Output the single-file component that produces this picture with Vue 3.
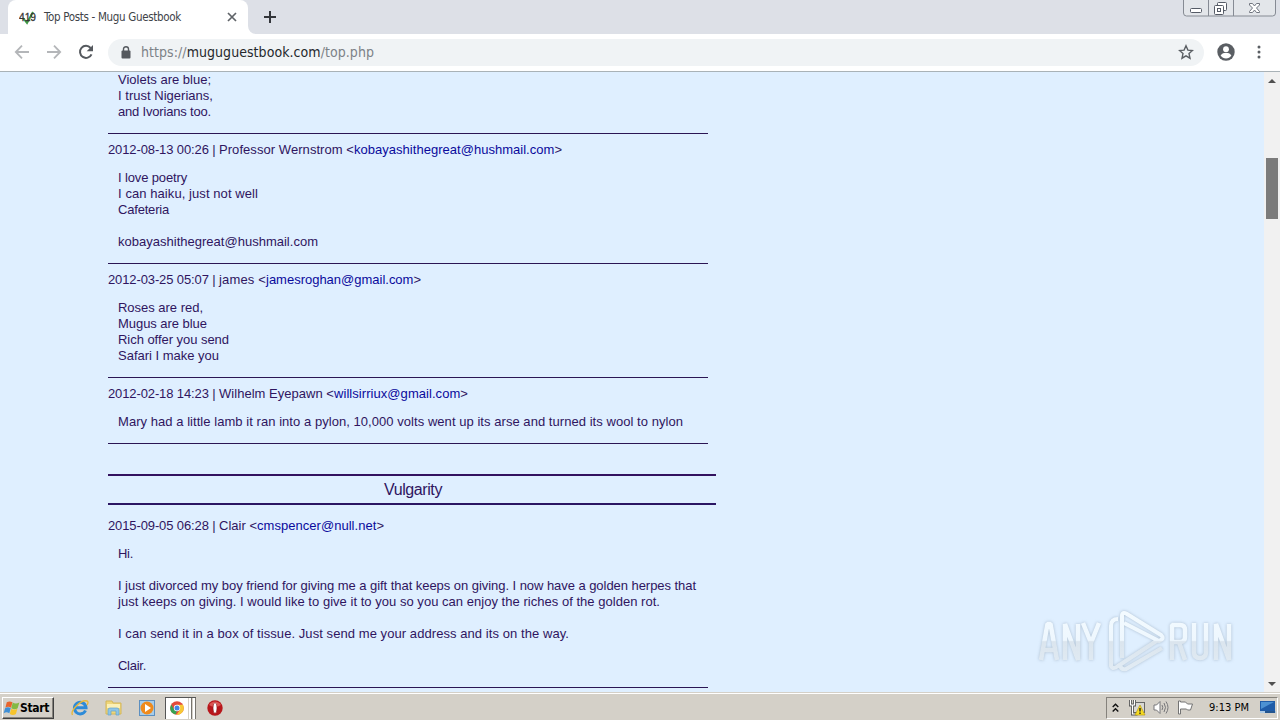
<template>
  <div class="screen">
    <div class="tabstrip">
      <div class="tab">
        <svg class="favicon" width="18" height="16" viewBox="0 0 18 16">
          <path d="M4 9l4 5 6-11" fill="none" stroke="#3f9a45" stroke-width="2" />
          <text x="0" y="11.500" font-size="11" textLength="17" lengthAdjust="spacingAndGlyphs" fill="#333" stroke="#333" stroke-width=".3">419</text>
        </svg>
        <span v-fit="137" class="tab-title">Top Posts - Mugu Guestbook</span>
        <svg class="tab-close" width="10" height="10" viewBox="0 0 10 10">
          <path d="M1 1l8 8M9 1l-8 8" stroke="#5f6368" stroke-width="1.7" />
        </svg>
        <svg class="tab-foot" width="8" height="8" viewBox="0 0 8 8"><path d="M0 0v8h8a8 8 0 0 1-8-8z" fill="#fff" /></svg>
      </div>
      <svg class="new-tab" width="12" height="12" viewBox="0 0 12 12">
        <path d="M6 0v12M0 6h12" stroke="#33363b" stroke-width="2" />
      </svg>
      <svg class="win-buttons" width="94" height="18" viewBox="0 0 94 18">
        <path d="M.5 0v13q0 3 3 3h86q3 0 3-3V0M25.500 0v16M50.500 0v16" fill="#e3e6ea" stroke="#868b94" />
        <rect x="7.500" y="8.500" width="11" height="4" rx="1" fill="#fff" stroke="#555b66" />
        <rect x="34.500" y="2.500" width="9" height="8" rx="1" fill="#fff" stroke="#555b66" />
        <rect x="31.500" y="5.500" width="9" height="9" rx="1" fill="#fff" stroke="#555b66" />
        <rect x="34.500" y="8.500" width="3" height="3" fill="#fff" stroke="#555b66" />
        <path d="M66.500 3.500h3l2 2.500 2-2.500h3v1.500L73.500 8l3 3.500v1h-3l-2-2.500-2 2.500h-3v-1l3-3.500-3-3z" fill="#fff" stroke="#70757f" />
      </svg>
    </div>

    <div class="toolbar">
      <svg class="nav" width="16" height="16" viewBox="0 0 16 16">
        <path d="M15 8H2M8 1.700L1.800 8 8 14.300" fill="none" stroke="#b4b6b9" stroke-width="1.800" />
      </svg>
      <svg class="nav" width="16" height="16" viewBox="0 0 16 16">
        <path d="M1 8h13M8 1.700L14.200 8 8 14.300" fill="none" stroke="#b4b6b9" stroke-width="1.800" />
      </svg>
      <svg class="nav" width="16" height="16" viewBox="0 0 16 16">
        <path d="M13.500 10.300A6 6 0 1 1 12.600 4" fill="none" stroke="#55595e" stroke-width="2" />
        <path d="M15 1v6.300H8.700z" fill="#55595e" />
      </svg>
      <div class="omnibox">
        <svg class="lock" width="10" height="13" viewBox="0 0 10 13">
          <rect x=".5" y="4.500" width="9" height="8" rx="1" fill="#55595e" />
          <path d="M2.500 5V3a2.500 2.300 0 0 1 5 0v2" fill="none" stroke="#55595e" stroke-width="1.400" />
        </svg>
        <span v-fit="233" class="url">https://<b>muguguestbook.com</b>/top.php</span>
        <svg class="star" width="16" height="16" viewBox="0 0 16 16">
          <path d="M8 1.800l1.900 4.300 4.600.4-3.500 3.100 1 4.600L8 11.800l-4 2.400 1-4.600-3.500-3.100 4.600-.4z" fill="none" stroke="#5a5e63" stroke-width="1.400" />
        </svg>
      </div>
      <svg class="avatar" width="18" height="18" viewBox="0 0 18 18">
        <circle cx="9" cy="9" r="8.700" fill="#5a5e63" />
        <circle cx="9" cy="6.200" r="2.900" fill="#fff" />
        <path d="M3.600 12.500c1.300-2 3.300-2.700 5.400-2.700s4.100.7 5.400 2.700c-1.300 2-3.300 2.900-5.400 2.900s-4.100-.9-5.400-2.900z" fill="#fff" />
      </svg>
      <svg class="menu" width="4" height="14" viewBox="0 0 4 14" fill="#5a5e63">
        <circle cx="2" cy="2" r="1.500" /><circle cx="2" cy="7" r="1.500" /><circle cx="2" cy="12" r="1.500" />
      </svg>
    </div>

    <div class="viewport">
      <div class="page">
        <div v-for="(post, i) in posts" :key="i" class="post">
          <h2 v-if="post.section"><span v-fit="58">{{ post.section }}</span></h2>
          <div v-if="post.name" class="head">
            <span v-fit="111">{{ post.date }} | </span>
            <span v-fit="post.nameWidth">{{ post.name }} &lt;</span>
            <span v-fit="post.mailWidth"><a>{{ post.email }}</a>&gt;</span>
          </div>
          <div class="message">
            <div v-for="(line, n) in post.lines" :key="n" class="line">
              <span v-if="line" v-fit="line[1]">{{ line[0] }}</span>
            </div>
          </div>
        </div>
      </div>

      <div class="scrollbar">
        <svg width="8" height="4" viewBox="0 0 8 4"><path d="M0 4l4-4 4 4z" fill="#505050" /></svg>
        <div class="thumb"></div>
        <svg width="8" height="4" viewBox="0 0 8 4"><path d="M0 0l4 4 4-4z" fill="#505050" /></svg>
      </div>

      <svg class="watermark" width="200" height="66" viewBox="0 0 200 66">
        <defs>
          <linearGradient id="fade" x1="0" y1="0" x2="0" y2="66" gradientUnits="userSpaceOnUse">
            <stop offset="0" stop-color="#f4fbff" />
            <stop offset=".49" stop-color="#eef7fe" />
            <stop offset=".51" stop-color="#dbe5ee" />
            <stop offset="1" stop-color="#e3edf5" />
          </linearGradient>
        </defs>
        <g fill="none" stroke="url(#fade)" stroke-width="4.500" stroke-linejoin="bevel">
          <path d="M5 52L11.500 16H14.500L21 52M8 42H18M29 52V16L42 52V16M47 15L55 35L63 15M55 34V52" />
          <path d="M136 52V17H144Q149 17 149 22V29Q149 34 144 34H136M143 34L149 52M158 15V44Q158 50 164 50Q170 50 170 44V15M180 52V16L193 52V16" />
          <path d="M82 11Q75 11 75 18V58Q77 62 82 58L122 32" stroke-width="4" stroke-linejoin="round" />
          <path d="M86 50V8Q86 3 91 6L125 27Q129 31 123 33L88 15M126 40L90 61Q85 62 84 57" stroke-width="4" stroke-linejoin="round" />
        </g>
      </svg>
    </div>

    <div class="taskbar">
      <div class="start">
        <svg width="17" height="16" viewBox="0 0 18 16">
          <path d="M4 2q3-2 6 0L8.500 7.700q-3-2-6 0z" fill="#e8642c" />
          <path d="M10.300 2.300q3 2 7 0L15.500 8.300q-3 2-6.700 0z" fill="#83b944" />
          <path d="M2.200 8.200q3-2 6 0L6.700 13.500q-3-2-6 0z" fill="#3f8fd6" />
          <path d="M8.700 8.700q3 2 6.500 0l-1.500 5.600q-3 2-6.500 0z" fill="#f6c42c" />
        </svg>
        <span v-fit="29">Start</span>
      </div>
      <svg class="task ie" width="18" height="18" viewBox="0 0 18 18">
        <path d="M14.500 11.500A5.800 5.800 0 1 1 15 8.700H5" fill="none" stroke="#2d8bd8" stroke-width="3" />
        <path d="M1.500 16C-1 12 10 0 16 2q2 1 0 4" fill="none" stroke="#e7b83c" stroke-width="1.400" />
      </svg>
      <svg class="task folder" width="17" height="17" viewBox="0 0 17 17">
        <path d="M1 2h6l1 2h8v11H1z" fill="#efd67a" stroke="#d3b659" />
        <path d="M2 5h13v4H2z" fill="#fbf0b6" />
        <path d="M3 16v-5q0-2 2-2h7q2 0 2 2v5h-3v-4H6v4z" fill="#8fc5e6" stroke="#62a4cf" stroke-width=".7" />
      </svg>
      <svg class="task player" width="16" height="16" viewBox="0 0 16 16">
        <rect x=".5" y=".5" width="15" height="15" fill="#a7cdea" stroke="#5c8fc0" />
        <circle cx="8" cy="8" r="6.500" fill="#ef8a1c" /><path d="M6 4l6 4-6 4z" fill="#fff" />
      </svg>
      <div class="running">
        <svg width="14" height="14" viewBox="0 0 14 14">
          <circle cx="7" cy="7" r="6.800" fill="#e34a3c" />
          <path d="M7 3.800h6a6.800 6.800 0 0 1-6.500 10L10 8.700z" fill="#f7c935" />
          <path d="M1.100 3.600L4.500 9 7 10l-1.500 3.600Q0 12 .2 7z" fill="#37a352" />
          <circle cx="7" cy="7" r="3.200" fill="#fff" /><circle cx="7" cy="7" r="2.500" fill="#4285e8" />
        </svg>
        <i></i><i></i>
      </div>
      <svg class="task opera" width="16" height="16" viewBox="0 0 16 16">
        <circle cx="8" cy="8" r="7.700" fill="#b8161b" /><path d="M2 5a7 7 0 0 1 12 0q-6 4-12 0z" fill="#dc5552" />
        <ellipse cx="8" cy="8" rx="2" ry="5.300" fill="#fff" stroke="#851015" stroke-width=".6" />
      </svg>

      <div class="tray">
        <svg class="chevrons" width="7" height="10" viewBox="0 0 7 10">
          <path d="M.7 4l2.800-2.800L6.300 4M.7 8.500l2.800-2.800 2.800 2.800" fill="none" stroke="#111" stroke-width="1.400" />
        </svg>
        <svg class="network" width="17" height="16" viewBox="0 0 17 16">
          <rect x="4.500" y="2.500" width="11" height="10" fill="#d9d8d4" stroke="#666" />
          <path d="M1.500 0v5h4V0M3.500 5v9h5" fill="none" stroke="#555" stroke-width="3" />
          <path d="M1.500 0v5h4V0M3.500 5v9h5" fill="none" stroke="#fff" stroke-width="1.200" />
          <path d="M11 5l5 10H6z" fill="#f7dc22" stroke="#b89b14" stroke-width=".7" />
          <path d="M11 8v3.500M11 12.500v1.500" stroke="#222" stroke-width="1.400" />
        </svg>
        <svg class="sound" width="17" height="15" viewBox="0 0 17 15" stroke="#77777a" fill="none">
          <path d="M1 5h2.500L7 1.500v12L3.500 10H1z" fill="#fff" />
          <path d="M9 5q1.500 2.500 0 5M11 3q3 4.500 0 9M13 1.500q4 6 0 12" />
        </svg>
        <svg class="flag" width="17" height="15" viewBox="0 0 17 15">
          <path d="M1.500 1v13h2V9h6l1 1h3l2-6h-5l-2-2h-5V1z" fill="#fff" stroke="#737373" />
        </svg>
        <span v-fit="40" class="clock">9:13 PM</span>
        <svg class="desktop" width="16" height="13" viewBox="0 0 16 13">
          <path d="M0 0h15v10H0z" fill="#1f5ca8" /><path d="M1 1h13L1 8z" fill="#4c91d2" />
          <path d="M0 10h16v2H0z" fill="#aac8e4" /><path d="M5 10h10v2H5z" fill="#23558f" />
        </svg>
      </div>
    </div>
  </div>
</template>

<script setup>
// lines are [text, width in px]; null is an empty line
const posts = [
  {
    lines: [
      ['Violets are blue;', 93],
      ['I trust Nigerians,', 95],
      ['and Ivorians too.', 93]
    ]
  },
  {
    date: '2012-08-13 00:26',
    name: 'Professor Wernstrom',
    email: 'kobayashithegreat@hushmail.com',
    nameWidth: 135,
    mailWidth: 208,
    lines: [
      ['I love poetry', 69],
      ['I can haiku, just not well', 140],
      ['Cafeteria', 51],
      null,
      ['kobayashithegreat@hushmail.com', 200]
    ]
  },
  {
    date: '2012-03-25 05:07',
    name: 'james',
    email: 'jamesroghan@gmail.com',
    nameWidth: 47,
    mailWidth: 155,
    lines: [
      ['Roses are red,', 85],
      ['Mugus are blue', 89],
      ['Rich offer you send', 111],
      ['Safari I make you', 101]
    ]
  },
  {
    date: '2012-02-18 14:23',
    name: 'Wilhelm Eyepawn',
    email: 'willsirriux@gmail.com',
    nameWidth: 115,
    mailWidth: 134,
    lines: [
      ['Mary had a little lamb it ran into a pylon, 10,000 volts went up its arse and turned its wool to nylon', 565]
    ]
  },
  {
    section: 'Vulgarity',
    date: '2015-09-05 06:28',
    name: 'Clair',
    email: 'cmspencer@null.net',
    nameWidth: 38,
    mailWidth: 127,
    lines: [
      ['Hi.', 15],
      null,
      ['I just divorced my boy friend for giving me a gift that keeps on giving. I now have a golden herpes that', 578],
      ['just keeps on giving. I would like to give it to you so you can enjoy the riches of the golden rot.', 542],
      null,
      ['I can send it in a box of tissue. Just send me your address and its on the way.', 451],
      null,
      ['Clair.', 28]
    ]
  }
]

// spreads the letters so that the text takes the given width
const vFit = {
  mounted(el, binding) {
    const free = binding.value - el.getBoundingClientRect().width
    el.style.letterSpacing = free / el.textContent.length + 'px'
  }
}
</script>

<style>
body {
  overflow: hidden;
}
</style>

<style scoped>
.screen {
  width: 1280px;
  height: 720px;
  display: flex;
  flex-direction: column;
  overflow: hidden;
  font-family: "Liberation Sans", Arial, sans-serif;
}

.screen svg {
  display: block;
  flex: none;
}

span {
  white-space: pre;
}

.tabstrip {
  height: 34px;
  flex: none;
  display: flex;
  background: #dde0e7;
  padding-left: 8px;
}

.tab {
  position: relative;
  width: 240px;
  height: 34px;
  box-sizing: border-box;
  display: flex;
  align-items: center;
  padding: 0 11px;
  background: #fff;
  border-radius: 8px 8px 0 0;
}

.tab-title {
  margin-left: 7px;
  font: 11.5px "DejaVu Sans Condensed", "DejaVu Sans", sans-serif;
  color: #404348;
  flex: none;
}

.tab-close {
  margin-left: auto;
}

.tab-foot {
  position: absolute;
  left: 240px;
  bottom: 0;
}

.new-tab {
  margin: 11px 0 0 16px;
}

.win-buttons {
  margin-left: auto;
  margin-right: 3px;
}

.toolbar {
  height: 37px;
  flex: none;
  display: flex;
  align-items: center;
  padding: 0 0 1px 14px;
  box-sizing: content-box;
  height: 36px;
  background: #fff;
  border-bottom: 1px solid #a9b2b7;
}

.nav {
  margin-right: 16px;
}

.omnibox {
  width: 1096px;
  height: 27px;
  margin-left: -2px;
  box-sizing: border-box;
  display: flex;
  align-items: center;
  padding: 0 10px 0 13px;
  border-radius: 14px;
  background: #f0f3f5;
}

.url {
  margin-left: 10px;
  font: 14px "DejaVu Sans Condensed", "DejaVu Sans", sans-serif;
  color: #7d8287;
}

.url b {
  font-weight: 400;
  color: #25282c;
}

.star {
  margin-left: auto;
}

.avatar {
  margin-left: 13px;
}

.menu {
  margin-left: 22px;
}

.viewport {
  position: relative;
  flex: 1;
  min-height: 0;
  display: flex;
  justify-content: space-between;
  overflow: hidden;
  background: #dfefff;
}

.page {
  width: 608px;
  margin-left: 108px;
  font-size: 13px;
  line-height: 16px;
  color: #2f1560;
}

.message {
  width: 590px;
  padding: 0 0 13px 10px;
  border-bottom: 1px solid #2b1654;
}

.line {
  height: 16px;
}

.head {
  height: 16px;
  display: flex;
  padding: 8px 0 12px;
}

.head a {
  color: #0a0a9c;
}

h2 {
  height: 27px;
  margin: 30px 0 5px;
  border-top: 2px solid #33125f;
  border-bottom: 2px solid #2b1663;
  font-size: 16px;
  font-weight: 400;
  line-height: 27px;
  text-align: center;
  text-indent: 2px;
}

.scrollbar {
  width: 16px;
  box-sizing: border-box;
  display: flex;
  flex-direction: column;
  align-items: center;
  padding: 7px 0;
  background: #f1f1f1;
}

.thumb {
  width: 12px;
  height: 61px;
  margin-top: 75px;
  margin-bottom: auto;
  background: #7b7b7b;
}

.watermark {
  position: absolute;
  left: 1036px;
  top: 536px;
  filter: drop-shadow(0 0 1.5px rgba(120, 140, 160, 0.5));
}

.taskbar {
  height: 27px;
  flex: none;
  box-sizing: border-box;
  display: flex;
  align-items: center;
  padding: 1px 0 0 2px;
  background: #d4d0c8;
  border-top: 1px solid #fff;
  box-shadow: 0 -1px 0 #d4d0c8;
  z-index: 1;
}

.start {
  width: 52px;
  height: 22px;
  box-sizing: border-box;
  display: flex;
  align-items: center;
  border: 1px solid;
  border-color: #fff #404040 #404040 #fff;
  box-shadow: inset -1px -1px 0 #86837d;
  font: bold 12px "DejaVu Sans Condensed", "DejaVu Sans", sans-serif;
  color: #000;
}

.ie {
  margin-left: 17px;
}

.folder {
  margin-left: 16px;
}

.player {
  margin-left: 17px;
}

.running {
  width: 31px;
  height: 22px;
  margin-left: 10px;
  box-sizing: border-box;
  display: flex;
  align-items: center;
  padding-left: 4px;
  background: linear-gradient(90deg, #fff 22px, #d4d0c8 22px);
  border-left: 1px solid #555;
  border-top: 1px solid #555;
}

.running i {
  width: 2px;
  height: 21px;
  margin-left: 1px;
  border-right: 1px solid #77746e;
  background: #fff;
}

.running i:first-of-type {
  margin-left: 5px;
}

.opera {
  margin-left: 11px;
}

.tray {
  width: 172px;
  height: 22px;
  margin: 0 2px 0 auto;
  box-sizing: border-box;
  display: flex;
  align-items: center;
  padding-left: 5px;
  border: 1px solid;
  border-color: #85827c #fff #fff #85827c;
}

.network {
  margin-left: 10px;
}

.sound {
  margin-left: 7px;
}

.flag {
  margin-left: 7px;
}

.clock {
  margin-left: 15px;
  font: 11px "DejaVu Sans Condensed", "DejaVu Sans", sans-serif;
  color: #000;
}

.desktop {
  margin-left: 11px;
}
</style>
